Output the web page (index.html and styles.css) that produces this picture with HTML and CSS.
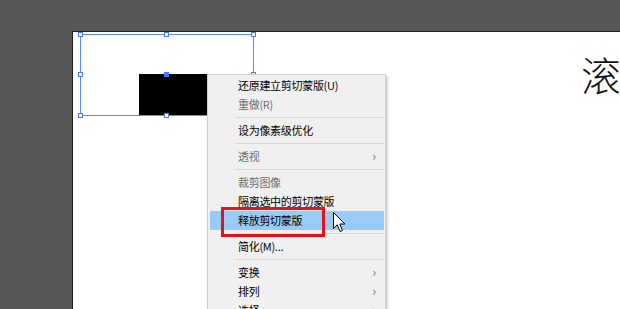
FILE: index.html
```html
<!DOCTYPE html>
<html lang="zh-CN">
<head>
    <meta charset="UTF-8">
    <title>释放剪切蒙版</title>
    <link rel="stylesheet" href="styles.css">
</head>
<body>
    <div class="workspace">
        <div class="artboard"></div>

        <!-- 画板上的对象 -->
        <div class="shape"></div>
        <div class="glyph">滚</div>

        <div class="bbox">
            <span class="handle h-tl"></span>
            <span class="handle h-tm"></span>
            <span class="handle h-tr"></span>
            <span class="handle h-ml"></span>
            <span class="handle h-mr"></span>
            <span class="handle h-bl"></span>
            <span class="handle h-bm"></span>
            <span class="handle h-br"></span>
            <span class="handle h-center"></span>
        </div>

        <!-- 右键菜单 -->
        <div class="menu">
            <div class="item">还原建立剪切蒙版(U)</div>
            <div class="item off">重做(R)</div>
            <div class="sep"></div>
            <div class="item">设为像素级优化</div>
            <div class="sep"></div>
            <div class="item off sub">透视</div>
            <div class="sep"></div>
            <div class="item off">裁剪图像</div>
            <div class="item">隔离选中的剪切蒙版</div>
            <div class="item active">释放剪切蒙版</div>
            <div class="sep"></div>
            <div class="item">简化(M)...</div>
            <div class="sep"></div>
            <div class="item sub">变换</div>
            <div class="item sub">排列</div>
            <div class="item sub">选择</div>
        </div>

        <div class="mark"></div>

        <svg class="cursor" width="13" height="21" viewBox="0 0 13 21">
            <path d="M0.5 0.5 L0.5 16.5 L4.3 12.8 L7 19.5 L9.5 18.5 L6.8 12 L12 12 Z" fill="#fff" stroke="#000" stroke-width="1"/>
        </svg>
    </div>
</body>
</html>
```

FILE: styles.css
```css
body {
    margin: 0;
    font-family: "Noto Sans CJK SC", "Liberation Sans", sans-serif;
}
div.workspace {
    position: relative;
    width: 620px;
    height: 309px;
    background-color: #565656;
    overflow: hidden;
}
div.workspace div.artboard {
    margin: 31px 0 0 72px;
    height: 300px;
    background-color: #fff;
    border-top: 1px solid #1e1e1e;
    border-left: 1px solid #1e1e1e;
}

/* 画板内容 */
div.shape {
    position: absolute;
    left: 139px;
    top: 74px;
    width: 80px;
    height: 41px;
    background-color: #000;
}
div.glyph {
    position: absolute;
    left: 581px;
    top: 46px;
    font-size: 40px;
    line-height: 56px;
    font-weight: 300;
    color: #111;
}

/* 选择框 */
div.bbox {
    position: absolute;
    left: 80px;
    top: 34px;
    width: 172px;
    height: 80px;
    border: 1px solid #5b86ff;
}
span.handle {
    position: absolute;
    width: 5px;
    height: 5px;
    background-color: #fff;
    border: 1px solid #4a78ff;
    box-sizing: border-box;
}
.h-tl { left: -3px; top: -3px; }
.h-tm { left: 83px; top: -3px; }
.h-tr { right: -3px; top: -3px; }
.h-ml { left: -3px; top: 37px; }
.h-mr { right: -3px; top: 37px; }
.h-bl { left: -3px; bottom: -3px; }
.h-bm { left: 83px; bottom: -3px; }
.h-br { right: -3px; bottom: -3px; }
span.h-center {
    left: 83px;
    top: 37px;
    background-color: #4a78ff;
}

/* 菜单 */
div.menu {
    position: absolute;
    left: 207px;
    top: 74px;
    width: 176px;
    height: 260px;
    padding: 1px 1px 0 0;
    background-color: #f0f0f0;
    border: 1px solid #cfcfcf;
    box-shadow: 2px 2px 2px rgba(0, 0, 0, 0.18);
    font-size: 11px;
    letter-spacing: -0.3px;
}
div.menu div.item {
    position: relative;
    height: 19px;
    line-height: 19px;
    margin-left: 2px;
    padding-left: 28px;
    color: #000;
}
div.menu div.item.off {
    color: #6d6d6d;
}
div.menu div.item.active {
    background-color: #99cbf7;
}
div.menu div.item.sub::after {
    content: "›";
    position: absolute;
    right: 8px;
    top: -1px;
    font-size: 13px;
    color: #808080;
}
div.menu div.sep {
    height: 7px;
    position: relative;
}
div.menu div.sep::after {
    content: "";
    position: absolute;
    left: 27px;
    right: 0;
    top: 3px;
    height: 1px;
    background-color: #d7d7d7;
}

/* 红框标注 */
div.mark {
    position: absolute;
    left: 221px;
    top: 207px;
    width: 98px;
    height: 24px;
    border: 3px solid #e2141a;
}
svg.cursor {
    position: absolute;
    left: 333px;
    top: 212px;
}
```
